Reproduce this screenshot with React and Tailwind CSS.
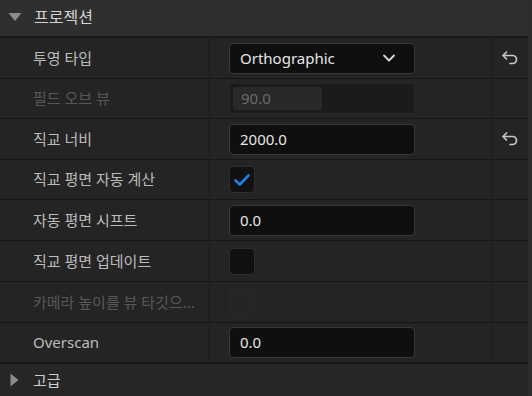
import { useState } from "react";

const FONT = { fontFamily: '"Noto Sans", "Noto Sans CJK KR", sans-serif' };

function ResetIcon() {
  return (
    <svg width="18" height="16" viewBox="0 0 18 16" fill="none">
      <path d="M5.5 2 L2 5.5 L5.5 9" stroke="#c8c8c8" strokeWidth="1.7" strokeLinecap="round" strokeLinejoin="round" />
      <path d="M2.5 5.5 H11.5 A4 4 0 0 1 11.5 13.5 H9" stroke="#c8c8c8" strokeWidth="1.7" strokeLinecap="round" />
    </svg>
  );
}

function Chevron() {
  return (
    <svg width="14" height="10" viewBox="0 0 14 10" fill="none">
      <path d="M2 2.5 L7 7.5 L12 2.5" stroke="#d8d8d8" strokeWidth="1.8" strokeLinecap="round" strokeLinejoin="round" />
    </svg>
  );
}

function Check() {
  return (
    <svg width="18" height="14" viewBox="0 0 18 14" fill="none">
      <path d="M2.5 7.5 L6.8 11.5 L15.5 2.5" stroke="#1f7fe6" strokeWidth="2.6" strokeLinecap="round" strokeLinejoin="round" />
    </svg>
  );
}

function NumberBox({ value }) {
  return (
    <div className="flex h-[31px] w-[186px] items-center rounded-[4px] border border-[#383838] bg-[#0f0f0f] px-[10px] text-[15px] text-[#e6e6e6]">
      {value}
    </div>
  );
}

function Row({ label, h, disabled, reset, last, children }) {
  return (
    <div className={`flex ${h} ${last ? "border-b-2" : "border-b"} border-[#161616]`}>
      <div className="flex w-[210px] shrink-0 items-center border-r border-[#1a1a1a] pl-[33px]">
        <span className={`whitespace-nowrap text-[15px] ${disabled ? "text-[#585858]" : "text-[#bcbcbc]"}`}>{label}</span>
      </div>
      <div className="flex w-[283px] shrink-0 items-center border-r border-[#1a1a1a] pl-[19px]">
        {children}
      </div>
      <div className="flex flex-1 items-center justify-center pr-[1px]">
        {reset && <ResetIcon />}
      </div>
    </div>
  );
}

export default function App() {
  const [autoPlane, setAutoPlane] = useState(true);

  return (
    <div className="flex h-[396px] w-[532px] overflow-hidden bg-[#242424]" style={FONT}>
      <div className="flex w-[528px] flex-col">
        <div className="flex h-[38px] shrink-0 items-center gap-[12px] border-b-2 border-[#1a1a1a] bg-[#2f2f2f] pl-[8px] pb-[2px]">
          <svg width="14" height="10" viewBox="0 0 14 10">
            <path d="M0.5 1 H13.5 L7 9 Z" fill="#8c8c8c" />
          </svg>
          <span className="text-[16px] text-[#d4d4d4]">프로젝션</span>
        </div>

        <Row label="투영 타입" h="h-[41px]" reset>
          <div className="flex h-[31px] w-[186px] items-center justify-between rounded-[4px] border border-[#383838] bg-[#0f0f0f] pl-[10px] pr-[18px] text-[15px] text-[#e6e6e6]">
            <span>Orthographic</span>
            <Chevron />
          </div>
        </Row>

        <Row label="필드 오브 뷰" h="h-[40px]" disabled>
          <div className="flex h-[31px] w-[186px] items-center rounded-[4px] border border-[#262626] bg-[#1b1b1b] p-[3px]">
            <div className="flex h-full w-[89px] items-center rounded-[3px] bg-[#292929] pl-[8px] text-[15px] text-[#6c6c6c]">
              90.0
            </div>
          </div>
        </Row>

        <Row label="직교 너비" h="h-[41px]" reset>
          <NumberBox value="2000.0" />
        </Row>

        <Row label="직교 평면 자동 계산" h="h-[40px]">
          <button
            onClick={() => setAutoPlane(!autoPlane)}
            className="flex h-[27px] w-[26px] items-center justify-center rounded-[4px] border border-[#2e2e2e] bg-[#111111]"
          >
            {autoPlane && <Check />}
          </button>
        </Row>

        <Row label="자동 평면 시프트" h="h-[41px]">
          <NumberBox value="0.0" />
        </Row>

        <Row label="직교 평면 업데이트" h="h-[41px]">
          <div className="h-[27px] w-[26px] rounded-[4px] border border-[#2e2e2e] bg-[#111111]" />
        </Row>

        <Row label="카메라 높이를 뷰 타깃으..." h="h-[41px]" disabled>
          <div className="h-[27px] w-[26px] rounded-[4px] border border-[#2a2a2a] bg-[#252525]" />
        </Row>

        <Row label="Overscan" h="h-[41px]" last>
          <NumberBox value="0.0" />
        </Row>

        <div className="flex flex-1 items-center gap-[14px] bg-[#262626] pl-[10px]">
          <svg width="9" height="14" viewBox="0 0 9 14">
            <path d="M0.5 0.5 V13.5 L8.5 7 Z" fill="#8c8c8c" />
          </svg>
          <span className="text-[15px] text-[#cfcfcf]">고급</span>
        </div>
      </div>
      <div className="w-[4px] bg-[#2c2c2c]" />
    </div>
  );
}
